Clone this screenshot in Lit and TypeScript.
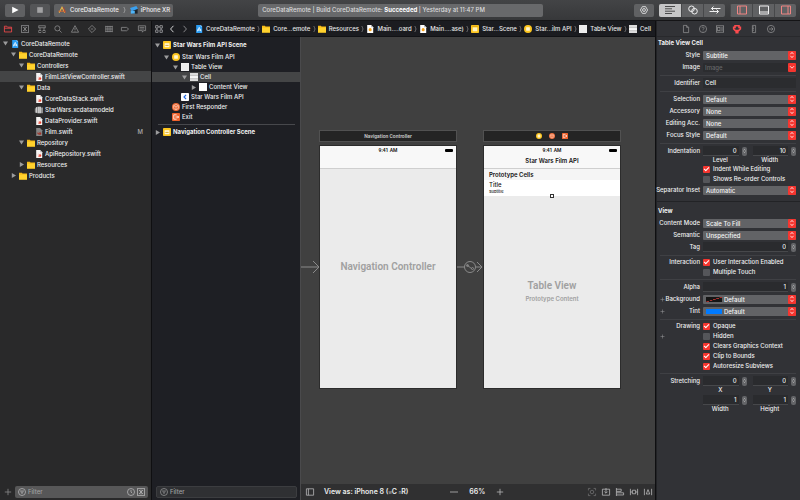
import { LitElement, html, svg, css, nothing, TemplateResult } from "lit";
import { customElement } from "lit/decorators.js";
import { classMap } from "lit/directives/class-map.js";

type Shape = ReturnType<typeof svg>;

/** Icons on a 10 x 10 grid. */
const shapes: Record<string, Shape> = {
  project: svg`<path d="M1.5 0h5.5l2 2v8h-7.5z" fill="#2a9df4"/><path d="M7 0l2 2H7z" fill="#bfe3ff"/><path d="M3 8l2.3-5L7.6 8M2.8 6.3h5" stroke="#fff" fill="none"/>`,
  folder: svg`<path d="M0 .8h3.600l.8 1H10V9.500H0z" fill="#f5b916"/><path d="M0 3.200h10V9.500H0z" fill="#ffd22e"/>`,
  swift: svg`<path d="M1.5 0h4.8L9 2.7V10H1.5z" fill="#f7f5f4"/><path d="M6.3 0L9 2.7H6.3z" fill="#c4c4c4"/><path d="M3 5.2c1.2 1 2 1.500 2.800 1.800L4 4.500l2.700 1.900C7 5.500 6.600 4.700 6.200 4.200c1.500 1 2 2.500 1.500 3.600-1 1.200-3.400.900-4.700-.600 1 .400 1.500.400 2 .200z" fill="#e8402c"/>`,
  swiftDim: svg`<path d="M1.5 0h4.8L9 2.7V10H1.5z" fill="#858585"/><path d="M3 5.200c1.200 1 2 1.500 2.800 1.800L4 4.500l2.700 1.900c.300-.900-.100-1.700-.500-2.200 1.500 1 2 2.500 1.500 3.600-1 1.200-3.400.900-4.700-.600z" fill="#a03228"/>`,
  model: svg`<path d="M1 2l2-1v8L1 8zM3.500 1h4v8h-4zM8 2h1.500v7H8z" fill="#d8d8d8"/><path d="M0 3h1v5H0zM5 1v8M6.300 1v8" stroke="#8a8a8a" stroke-width=".5" fill="#aaa"/>`,
  storyboard: svg`<path d="M1.500 0h4.800L9 2.700V10H1.500z" fill="#fff"/><path d="M6.300 0L9 2.700H6.300z" fill="#bbb"/><circle cx="5.200" cy="5.800" r="1.900" fill="#f6a21c"/>`,
  scene: svg`<rect width="10" height="10" rx="1" fill="#fcc51f"/><rect x="2.200" y="3" width="5.600" height="4.800" fill="#fff3c4"/><path d="M1.500 1.600h7" stroke="#c98d00" stroke-width=".7"/>`,
  controller: svg`<circle cx="5" cy="5" r="5" fill="#fcc51f"/><rect x="2.700" y="2.700" width="4.600" height="4.600" rx=".5" fill="#fff6d2"/>`,
  view: svg`<rect width="10" height="10" fill="#efefef"/><path d="M1 2.500h8M1 5h8M1 7.500h8" stroke="#e0e0e0" stroke-width=".5"/>`,
  cell: svg`<rect width="10" height="10" fill="#dcdcdc"/><rect y="3.300" width="10" height="3.600" fill="#f6f6f6"/><path d="M0 3.200h10M0 7h10" stroke="#a2a2a2" stroke-width=".6"/>`,
  content: svg`<rect width="10" height="10" fill="#fff"/>`,
  navItem: svg`<rect width="10" height="10" rx="1" fill="#fff"/><path d="M6.300 2.300L3.800 5l2.500 2.700" stroke="#2368e0" stroke-width="1.500" fill="none"/>`,
  responder: svg`<circle cx="5" cy="5" r="5" fill="#ee6a36"/><path d="M5 1.800l3 1.500v3.500L5 8.400 2 6.800V3.300zM2 3.300l3 1.500 3-1.500M5 4.800v3.500" stroke="#ffd9c8" stroke-width=".8" fill="none"/>`,
  exit: svg`<rect width="10" height="10" rx="1" fill="#f0622c"/><path d="M5.800 2.300H2.200v5.400h3.600M4.300 5h4M6.700 3.400L8.300 5 6.700 6.600" stroke="#fff" stroke-width="1" fill="none"/>`,
  sceneBar: svg`<rect width="10" height="10" rx="1" fill="#fcc51f"/><rect x="2" y="2.800" width="6" height="5" fill="#fff7da"/><path d="M3 5.500h4" stroke="#d49a00"/>`,
  xcode: svg`<path d="M1.500 8.500L5 1.500l3.500 7" stroke="#e8b84a" stroke-width="1.300" fill="none"/><path d="M.5 6.500h9" stroke="#d86a2c" stroke-width="1.200"/><path d="M7 1.500l2 7" stroke="#c03b28"/>`,
  device: svg`<rect x="3" y="2.500" width="6.500" height="7" fill="#1c242c"/><path d="M0 2.500L8 0l2 3.500-8 3z" fill="#3aa0ef"/><path d="M1 6l5 0v3.500H1z" fill="#4fb4f7"/>`,
  // navigator tabs
  folderLine: svg`<path d="M.5 1.500h3l1 1.200h5v6h-9zM.5 4h9" class="l"/>`,
  xbox: svg`<rect x=".5" y=".8" width="9" height="8.400" class="l"/><path d="M2.500 2.500l5 5M7.500 2.500l-5 5M5 2v6" class="l"/>`,
  tree: svg`<rect x="1" y="1" width="8" height="2.500" class="l"/><path d="M2.500 3.500V7M7.500 3.500V7" class="l"/><rect x="1" y="7" width="2.500" height="2.300" class="l"/><rect x="6.300" y="7" width="2.500" height="2.300" class="l"/>`,
  search: svg`<circle cx="4.200" cy="4.200" r="3.200" class="l"/><path d="M6.500 6.500L9.500 9.500" class="l"/>`,
  warn: svg`<path d="M5 .8L9.500 9H.5zM5 3.500v3M5 7.200v1" class="l"/>`,
  diamond: svg`<path d="M5 .5L9.500 5 5 9.500.5 5zM3.500 5h3" class="l"/>`,
  gauge: svg`<path d="M.5 2h9M.5 5h9M.5 8h9M1 1v8M3.600 1v8M6.300 1v8M9 1v8" class="l"/>`,
  tag: svg`<path d="M.5 3h6.500L9.500 5 7 7.200H.5z" class="l"/>`,
  bubble: svg`<path d="M.5 1h9v6H7L5.500 9V7h-5zM2 3h6M2 5h6" class="l"/>`,
  grid: svg`<path d="M.8.8h3v3h-3zM6.200.8h3v3h-3zM.8 6.200h3v3h-3zM6.200 6.200h3v3h-3zM3.800 2.300h2.400M2.300 3.800v2.400M7.700 3.800v2.400" class="l"/>`,
  back: svg`<path d="M6.800 1L3.200 5l3.600 4" class="l"/>`,
  next: svg`<path d="M3.200 1L6.800 5 3.200 9" class="l"/>`,
  sep: svg`<path d="M3.500 -1c.8 2 2.500 4 2.500 6s-1.700 4-2.500 6" class="l"/>`,
  // inspector tabs
  page: svg`<path d="M1.800.5h4L8.300 3v6.500H1.800zM5.800.5V3h2.500" class="l"/>`,
  help: svg`<circle cx="5" cy="5" r="4.500" class="l"/><path d="M3.600 4c0-2 2.900-1.800 2.800 0 0 1-1.400 1-1.400 2M5 7v1" class="l"/>`,
  identity: svg`<rect x=".5" y="1" width="9" height="8" class="l"/><rect x="2" y="3" width="3" height="4" class="l"/><path d="M6.500 3.500h2M6.500 5h2M6.500 6.500h2" class="l"/>`,
  attributes: svg`<path d="M2.500 1h5v2h1.700v2L7 7H6v2.500H4V7H3L.8 5V3h1.700z" class="l heavy"/>`,
  size: svg`<path d="M3 .5h4v9H3zM3 2.500h2M3 4.500h2M3 6.500h2" class="l"/>`,
  connect: svg`<circle cx="5" cy="5" r="4.500" class="l"/><path d="M2.500 5h5M5.500 3l2 2-2 2" class="l"/>`,
  // toolbar
  play: svg`<path d="M1.500.8L9.500 5 1.500 9.200z" fill="#fff"/>`,
  stop: svg`<rect x="1.500" y="1.500" width="7" height="7" fill="#a2a2a3"/>`,
  shield: svg`<path d="M3 .8h4L9.500 5 7 9.200H3L.5 5z" class="l"/><circle cx="5" cy="5" r="1.800" class="l"/>`,
  lines: svg`<path d="M0 1.500h10M0 3.800h7M0 6.200h10M0 8.500h7" class="l"/>`,
  rings: svg`<circle cx="3.500" cy="3.800" r="2.800" class="l"/><circle cx="6.500" cy="6.200" r="2.800" class="l"/>`,
  swap: svg`<path d="M10.500 3.500H1.500M3.500 1.500L1.500 3.500l2 2M-.5 6.500h9M6.500 4.500l2 2-2 2" class="l"/>`,
  paneLeft: svg`<path d="M.5 1h9v8h-9zM3 1v8" class="l"/>`,
  paneBottom: svg`<path d="M.5 1h9v8h-9zM.5 7h9" class="l"/>`,
  paneRight: svg`<path d="M.5 1h9v8h-9zM7 1v8" class="l"/>`,
  filter: svg`<circle cx="5" cy="5" r="4.400" class="l"/><path d="M2.500 3.800h5M3.500 5.300h3M4.300 6.800h1.400" class="l"/>`,
  clock: svg`<circle cx="5" cy="5" r="4.400" class="l"/><path d="M5 2.300V5l1.500 1.500" class="l"/>`,
  plus: svg`<path d="M5 1v8M1 5h8" class="l"/>`,
  minus: svg`<path d="M0 5h10" class="l"/>`,
  frames: svg`<path d="M.5 3V.5H3M7 .5h2.500V3M9.500 7v2.500H7M3 9.500H.5V7" class="l"/><circle cx="5" cy="5" r="2.200" class="l"/>`,
  embed: svg`<path d="M.5 1.500h9v7.500h-9zM5 0v6M3 4.500l2 2 2-2" class="l"/>`,
  align: svg`<path d="M.5 0v10M.5 1.500h6v2.700h-6M.5 6h9v2.700h-9" class="l"/>`,
  pin: svg`<path d="M.5 1v8M9.500 1v8M.5 5H3M7 5h2.500M3 2.800h4v4.400H3z" class="l"/>`,
  resolve: svg`<path d="M.5 1v8M9.500 1v8M5 2L2.800 7.500h4.400z" class="l"/>`,
  updown: svg`<path d="M3 4l2-2.300L7 4M3 6l2 2.300L7 6" class="l"/>`,
  down: svg`<path d="M2.500 4L5 6.500 7.500 4" class="l"/>`,
};

const icon = (name: string, cls = "") =>
  html`<svg class="icon ${cls}" viewBox="0 0 10 10" aria-hidden="true">${shapes[name]}</svg>`;

interface Node {
  text: string;
  icon: string;
  depth: number;
  open?: boolean;
  selected?: boolean;
  bold?: boolean;
  badge?: string;
}

const files: Node[] = [
  { text: "CoreDataRemote", icon: "project", depth: 0, open: true },
  { text: "CoreDataRemote", icon: "folder", depth: 1, open: true },
  { text: "Controllers", icon: "folder", depth: 2, open: true },
  { text: "FilmListViewController.swift", icon: "swift", depth: 3, selected: true },
  { text: "Data", icon: "folder", depth: 2, open: true },
  { text: "CoreDataStack.swift", icon: "swift", depth: 3 },
  { text: "StarWars.xcdatamodeld", icon: "model", depth: 3 },
  { text: "DataProvider.swift", icon: "swift", depth: 3 },
  { text: "Film.swift", icon: "swiftDim", depth: 3, badge: "M" },
  { text: "Repository", icon: "folder", depth: 2, open: true },
  { text: "ApiRepository.swift", icon: "swift", depth: 3 },
  { text: "Resources", icon: "folder", depth: 2, open: false },
  { text: "Products", icon: "folder", depth: 1, open: false },
];

const filmScene: Node[] = [
  { text: "Star Wars Film API", icon: "controller", depth: 1, open: true },
  { text: "Table View", icon: "view", depth: 2, open: true },
  { text: "Cell", icon: "cell", depth: 3, open: true, selected: true },
  { text: "Content View", icon: "content", depth: 4, open: false },
  { text: "Star Wars Film API", icon: "navItem", depth: 2 },
  { text: "First Responder", icon: "responder", depth: 1 },
  { text: "Exit", icon: "exit", depth: 1 },
];

const crumbs: [string, string][] = [
  ["project", "CoreDataRemote"],
  ["folder", "Core...emote"],
  ["folder", "Resources"],
  ["storyboard", "Main....oard"],
  ["storyboard", "Main....ase)"],
  ["scene", "Star...Scene"],
  ["controller", "Star...ilm API"],
  ["view", "Table View"],
  ["cell", "Cell"],
];

@customElement("app-root")
export class AppRoot extends LitElement {
  static styles = css`
    :host {
      display: flex;
      flex-direction: column;
      height: 100vh;
      overflow: hidden;
      background: #1c1d20;
      color: #f0f0f1;
      font: 500 6px/10px Inter, "Liberation Sans", sans-serif;
      white-space: nowrap;
    }
    * { box-sizing: border-box; }
    button, input, select { font: inherit; color: inherit; margin: 0; padding: 0; border: 0; background: none; min-width: 0; }
    ul { list-style: none; margin: 0; padding: 0; }
    h2 { font: inherit; font-weight: 700; margin: 0; }
    .icon { width: 8px; height: 8px; flex: none; display: block; overflow: visible; }
    .l { fill: none; stroke: currentColor; stroke-width: 1; }
    .heavy { stroke-width: 2; }
    .wide { width: 10px; }
    .big { width: 10px; height: 10px; }

    .toolbar {
      flex: none;
      height: 21px;
      display: grid;
      grid-template-columns: 1fr 36% 1fr;
      align-items: center;
      padding: 0 4px 0 5px;
      background: linear-gradient(#434446, #37383a);
      border-bottom: 1px solid #141416;
    }
    .tools { display: flex; gap: 5px; }
    .tools.end { justify-content: flex-end; }
    .tool, .scheme, .activity, .segments { height: 13px; border-radius: 2px; background: #606163; display: flex; align-items: center; justify-content: center; }
    .tool { width: 20px; }
    .tool.muted { background: #545557; }
    .scheme { gap: 3px; padding: 0 3px; margin-left: -1px; }
    .scheme .thin { color: #d0d0d1; }
    .activity { justify-content: flex-start; padding: 0 4px; background: #68696b; color: #dcdcdd; }
    .activity b { font-weight: 700; color: #fff; }
    .segments { overflow: hidden; }
    .segments button { width: 22px; height: 13px; display: flex; align-items: center; justify-content: center; border-left: 1px solid #47484a; }
    .segments button.on { background: #c6c6c7; color: #4a4a4b; border-left: 0; }
    .pink { color: #ef8583; }

    .window { flex: 1; min-height: 0; display: flex; }
    .navigator { width: 151px; flex: none; display: flex; flex-direction: column; background: #29292a; }
    .tabs { flex: none; height: 16px; display: flex; align-items: center; justify-content: space-between; padding: 0 5px 0 4px; color: #8a8a8c; border-bottom: 1px solid #1d1d1e; }
    .tabs button { color: inherit; }
    .tabs button.active { color: #fc4b4e; }
    .tree { flex: 1; padding-top: 1px; }
    .row { display: flex; align-items: center; gap: 3px; height: 11px; padding-left: 3px; }
    .row.selected { background: #444546; }
    .row.bold { font-weight: 700; height: 13px; }
    .outline .row { height: 10px; }
    .outline .row.bold { height: 14px; }
    .indent { width: 8px; flex: none; }
    .outline .indent { width: 9px; }
    .row .indent + .indent { margin-left: -3px; }
    .row .indent + .twist { margin-left: -3px; }
    .row .label { margin-left: -1px; }
    .twist { width: 5px; height: 5px; flex: none; fill: #9c9c9d; }
    .badge { margin-left: auto; padding-right: 8px; color: #a9a9aa; }
    .filterbar { flex: none; height: 16px; display: flex; align-items: center; gap: 3px; padding: 0 3px 0 4px; color: #8b8b8c; }
    .filter { flex: 1; min-width: 0; height: 12px; display: flex; align-items: center; gap: 2px; padding: 0 3px; border-radius: 2px; background: #575758; color: #b4b4b5; }
    .filter input { flex: 1; width: 0; height: 10px; outline: 0; }
    .filter input::placeholder { color: #a0a0a1; opacity: 1; }
    .outline .filter { background: #2f3033; color: #929293; border: 1px solid #3c3d40; }

    .editor { flex: 1; min-width: 0; display: flex; flex-direction: column; border-left: 1px solid #0f0f11; border-right: 1px solid #0f0f11; }
    .jumpbar { flex: none; height: 16px; display: flex; align-items: center; padding: 0 4px 0 3px; gap: 6px; background: #1b1c20; border-bottom: 1px solid #111215; }
    .history { display: flex; gap: 5px; color: #a0a0a2; }
    .history .bright { color: #fff; }
    .crumbs { flex: 1; display: flex; justify-content: space-between; align-items: center; }
    .crumb { display: flex; align-items: center; gap: 3px; color: #e8e8e9; text-decoration: none; }
    .thin { width: 5px; color: #b4b4b5; }
    .panes { flex: 1; min-height: 0; display: flex; }
    .outline { width: 149px; flex: none; display: flex; flex-direction: column; background: #1e1f24; border-right: 1px solid #4a4a4c; }
    .rule { height: 1px; margin: 2px 5px 0 6px; background: #47484c; }
    .stage { flex: 1; min-width: 0; display: flex; flex-direction: column; background: #404040; }
    .canvas { flex: 1; position: relative; overflow: hidden; }
    .scene { position: absolute; top: 93px; width: 138px; display: flex; flex-direction: column; gap: 3px; }
    .scene.first { left: 18px; }
    .scene.second { left: 182px; }
    .dock { height: 12px; display: flex; align-items: center; justify-content: center; gap: 7px; background: #242424; border: 1px solid #515151; font: 600 5px/10px Roboto, sans-serif; color: #c8c8c8; }
    .dock .icon { width: 6px; height: 6px; }
    .phone { height: 244px; display: flex; flex-direction: column; background: #ebebeb; border: 1px solid #2c2c2c; color: #111; }
    .status { height: 8px; display: grid; grid-template-columns: 1fr auto 1fr; align-items: center; padding: 0 3px; background: #f8f8f8; font: 600 5px/8px Roboto, sans-serif; }
    .battery { grid-column: 3; justify-self: end; width: 8px; height: 3px; border-radius: 1px; background: #000; }
    .titlebar { height: 15px; background: #f8f8f8; border-bottom: 1px solid #cfcfcf; text-align: center; line-height: 14px; font-weight: 600; }
    .protoheader { height: 11px; padding-left: 5px; background: #f5f5f5; font-weight: 600; line-height: 11px; }
    .protocell { position: relative; height: 16px; padding: 1px 5px; background: #fff; line-height: 8px; }
    .protocell small { display: block; font-size: 4px; line-height: 5px; }
    .handle { position: absolute; left: 50%; bottom: -2px; width: 4px; height: 4px; margin-left: -2px; border: 1px solid #333; background: #fff; }
    .placeholder { flex: 1; display: flex; flex-direction: column; align-items: center; justify-content: center; gap: 2px; color: #a0a0a0; font: 600 10px/12px Roboto, sans-serif; }
    .first .placeholder { padding-bottom: 24px; }
    .placeholder small { font: 600 6px/10px Inter, sans-serif; }
    .arrow { position: absolute; top: 223px; height: 14px; color: #8a8a8a; }
    .arrow.entry { left: 0; width: 19px; }
    .arrow.segue { left: 156px; width: 26px; }
    .stagebar { flex: none; height: 16px; display: flex; align-items: center; padding: 0 3px 0 5px; gap: 10px; background: #303031; color: #ececec; font-size: 7px; font-weight: 600; }
    .stagebar small { font-size: 4px; color: #a8a8a8; }
    .zoom { display: flex; align-items: center; gap: 11px; margin-left: 32px; }
    .layouttools { display: flex; gap: 6px; margin-left: auto; color: #b8b8b9; }
    .dim { color: #707071; }
    .slate { color: #b8b8b9; }

    .inspector { width: 144px; flex: none; background: #313236; border-left: 1px solid #222326; }
    .inspector .tabs { justify-content: center; gap: 9px; border-bottom-color: #28292c; }
    .inspector h2 { height: 12px; line-height: 12px; padding-left: 1px; }
    .inspector h2.later { height: 16px; line-height: 17px; border-top: 1px solid #222326; }
    .group { margin: 0 4px 0 3px; padding: 1px 0 2px; border-bottom: 1px solid #3f4044; }
    .group.head { padding-top: 0; }
    .group.last { border-bottom: 0; padding-bottom: 5px; }
    .field { display: grid; grid-template-columns: 5px 36px minmax(0, 1fr); column-gap: 1px; align-items: center; height: 12px; }
    .field.tick { height: 10px; }
    .field .name { grid-column: 1 / 3; display: flex; justify-content: flex-end; padding-right: 2px; }
    .field .icon.add + .name { grid-column: 2; }
    .field .icon.add { width: 5px; height: 5px; color: #98989a; }
    .pick { position: relative; display: flex; }
    .pick select { appearance: none; width: 100%; height: 9px; padding-left: 3px; line-height: 9px; border-radius: 1px; background: #626366; color: #f6f6f6; }
    .pick.swatched select { padding-left: 21px; }
    .pick.blank select { background: #2b2c2f; color: #66676a; padding-left: 2px; }
    .knob { position: absolute; right: 0; top: 0; width: 8px; height: 9px; display: flex; align-items: center; justify-content: center; border-radius: 1px; background: #f5352f; color: #fff; pointer-events: none; }
    .swatch { position: absolute; left: 3px; top: 2px; width: 16px; height: 5px; background: #007aff; pointer-events: none; }
    .swatch.none { background: linear-gradient(163deg, #151515 46%, #a8302c 48%, #a8302c 54%, #151515 56%); }
    .text { width: 100%; height: 10px; padding-left: 2px; background: #2b2c2f; }
    .pair { display: grid; grid-template-columns: 1fr 1fr; column-gap: 6px; }
    .number { display: flex; align-items: center; gap: 3px; }
    .number input { flex: 1; width: 10px; height: 10px; text-align: right; padding-right: 2px; background: #2a2b2e; border-bottom: 1px solid #47484b; }
    .stepper { width: 5px; height: 9px; border-radius: 2px; background: #646568; color: #e0e0e0; display: flex; align-items: center; justify-content: center; }
    .stepper .icon { width: 5px; height: 8px; }
    .captions { display: grid; grid-template-columns: 1fr 1fr; column-gap: 6px; margin-left: 43px; height: 7px; line-height: 6px; text-align: center; }
    .captions label { padding-right: 9px; }
    .check { display: flex; align-items: center; gap: 3px; }
    .check input { appearance: none; flex: none; width: 7px; height: 7px; border-radius: 1px; background: #55565a; display: grid; place-items: center; }
    .check input:checked { background: #f5352f; }
    .check input:checked::before { content: ""; width: 4px; height: 2px; border: solid #fff; border-width: 0 0 1px 1px; transform: rotate(-45deg); margin-bottom: 1px; }
  `;

  private node(n: Node) {
    return html`<li class=${classMap({ row: true, selected: !!n.selected, bold: !!n.bold })}>
      ${Array.from({ length: n.depth }, () => html`<span class="indent"></span>`)}
      <svg class="twist" viewBox="0 0 6 6" aria-hidden="true">
        ${n.open === undefined ? nothing : n.open ? svg`<path d="M0 .5h6L3 5.500z"/>` : svg`<path d="M1 0v6l5-3z"/>`}
      </svg>
      ${icon(n.icon)}<span class="label">${n.text}</span>
      ${n.badge ? html`<span class="badge">${n.badge}</span>` : nothing}
    </li>`;
  }

  private field(name: string, id: string, control: TemplateResult, opts: { add?: boolean; tick?: boolean } = {}) {
    return html`<div class="field ${opts.tick ? "tick" : ""}">
      ${opts.add ? icon("plus", "add") : nothing}
      ${id ? html`<label class="name" for=${id}>${name}</label>` : html`<span class="name">${name}</span>`}
      ${control}
    </div>`;
  }

  private pick(name: string, id: string, value: string, swatch = "") {
    return this.field(name, id, html`<div class="pick ${swatch ? "swatched" : ""}">
      <select id=${id}><option>${value}</option></select>
      ${swatch ? html`<span class="swatch ${swatch}"></span>` : nothing}
      <span class="knob">${icon("updown")}</span>
    </div>`, { add: !!swatch });
  }

  private number(id: string, value: string) {
    return html`<div class="number">
      <input id=${id} type="text" inputmode="numeric" .value=${value}>
      <button class="stepper" aria-label="Step">${icon("updown")}</button>
    </div>`;
  }

  private check(name: string, text: string, on: boolean, add = false) {
    return this.field(name, "", html`<label class="check"><input type="checkbox" .checked=${on}>${text}</label>`, { tick: true, add });
  }

  private pair(name: string, a: [string, string], b: [string, string], prefix: string) {
    return html`${this.field(name, "", html`<div class="pair">${this.number(prefix + "-a", a[1])}${this.number(prefix + "-b", b[1])}</div>`)}
      <div class="captions"><label for="${prefix}-a">${a[0]}</label><label for="${prefix}-b">${b[0]}</label></div>`;
  }

  private tabs(names: string[], active: string) {
    return html`<nav class="tabs">${names.map(
      (n) => html`<button class=${n === active ? "active" : ""} aria-label=${n}>${icon(n)}</button>`
    )}</nav>`;
  }

  private toolbar() {
    return html`<header class="toolbar">
      <div class="tools">
        <button class="tool" aria-label="Run">${icon("play")}</button>
        <button class="tool muted" aria-label="Stop">${icon("stop")}</button>
        <button class="scheme">${icon("xcode", "wide")}<span>CoreDataRemote</span>${icon("sep", "thin")}${icon("device")}<span>iPhone XR</span></button>
      </div>
      <div class="activity"><span>CoreDataRemote | Build CoreDataRemote: <b>Succeeded</b> | Yesterday at 11:47 PM</span></div>
      <div class="tools end">
        <button class="tool" aria-label="Library">${icon("shield")}</button>
        <div class="segments">
          <button class="on" aria-label="Standard editor">${icon("lines", "big")}</button>
          <button aria-label="Assistant editor">${icon("rings", "big")}</button>
          <button aria-label="Version editor">${icon("swap", "big")}</button>
        </div>
        <div class="segments">
          <button class="pink" aria-label="Navigator">${icon("paneLeft", "big")}</button>
          <button aria-label="Debug area">${icon("paneBottom", "big")}</button>
          <button class="pink" aria-label="Inspectors">${icon("paneRight", "big")}</button>
        </div>
      </div>
    </header>`;
  }

  private status() {
    return html`<div class="status"><span></span><span>9:41 AM</span><span class="battery"></span></div>`;
  }

  private canvas() {
    return html`<div class="canvas">
      <section class="scene first">
        <div class="dock">Navigation Controller</div>
        <div class="phone">${this.status()}<div class="titlebar"></div>
          <div class="placeholder">Navigation Controller</div>
        </div>
      </section>
      <section class="scene second">
        <div class="dock">${icon("controller")}${icon("responder")}${icon("exit")}</div>
        <div class="phone">${this.status()}<div class="titlebar">Star Wars Film API</div>
          <div class="protoheader">Prototype Cells</div>
          <div class="protocell">Title<small>Subtitle</small><span class="handle"></span></div>
          <div class="placeholder">Table View<small>Prototype Content</small></div>
        </div>
      </section>
      <svg class="arrow entry" viewBox="0 0 19 14"><path class="l" d="M0 7h18M12 1l6 6-6 6"/></svg>
      <svg class="arrow segue" viewBox="0 0 26 14"><path class="l" d="M0 7h7M19 7h6M20 2l5 5-5 5M10 5l5 4"/><circle class="l" cx="13" cy="7" r="5.500"/><circle class="l" cx="10.500" cy="5.500" r="1"/><circle class="l" cx="15.500" cy="8.500" r="1"/></svg>
    </div>`;
  }

  private inspector() {
    return html`<aside class="inspector">
      ${this.tabs(["page", "help", "identity", "attributes", "size", "connect"], "attributes")}
      <h2>Table View Cell</h2>
      <div class="group head">
        ${this.pick("Style", "style", "Subtitle")}
        ${this.field("Image", "image", html`<div class="pick blank"><select id="image"><option>Image</option></select><span class="knob">${icon("down")}</span></div>`)}
      </div>
      <div class="group">${this.field("Identifier", "identifier", html`<input class="text" id="identifier" type="text" .value=${"Cell"}>`)}</div>
      <div class="group">
        ${this.pick("Selection", "selection", "Default")}
        ${this.pick("Accessory", "accessory", "None")}
        ${this.pick("Editing Acc.", "editing", "None")}
        ${this.pick("Focus Style", "focus", "Default")}
      </div>
      <div class="group last">
        ${this.pair("Indentation", ["Level", "0"], ["Width", "10"], "indent")}
        ${this.check("", "Indent While Editing", true)}
        ${this.check("", "Shows Re-order Controls", false)}
        ${this.pick("Separator Inset", "inset", "Automatic")}
      </div>
      <h2 class="later">View</h2>
      <div class="group head">
        ${this.pick("Content Mode", "mode", "Scale To Fill")}
        ${this.pick("Semantic", "semantic", "Unspecified")}
        ${this.field("Tag", "tag", this.number("tag", "0"))}
      </div>
      <div class="group">
        ${this.check("Interaction", "User Interaction Enabled", true)}
        ${this.check("", "Multiple Touch", false)}
      </div>
      <div class="group">
        ${this.field("Alpha", "alpha", this.number("alpha", "1"))}
        ${this.pick("Background", "background", "Default", "none")}
        ${this.pick("Tint", "tint", "Default", "blue")}
      </div>
      <div class="group">
        ${this.check("Drawing", "Opaque", true)}
        ${this.check("", "Hidden", false, true)}
        ${this.check("", "Clears Graphics Context", true)}
        ${this.check("", "Clip to Bounds", true)}
        ${this.check("", "Autoresize Subviews", true)}
      </div>
      <div class="group last">
        ${this.pair("Stretching", ["X", "0"], ["Y", "0"], "origin")}
        ${this.pair("", ["Width", "1"], ["Height", "1"], "extent")}
      </div>
    </aside>`;
  }

  render() {
    return html`${this.toolbar()}
      <main class="window">
        <aside class="navigator">
          ${this.tabs(["folderLine", "xbox", "tree", "search", "warn", "diamond", "gauge", "tag", "bubble"], "folderLine")}
          <ul class="tree">${files.map((f) => this.node(f))}</ul>
          <div class="filterbar">${icon("plus")}
            <label class="filter">${icon("filter")}<input type="text" placeholder="Filter" aria-label="Filter files">${icon("clock")}${icon("xbox")}</label>
          </div>
        </aside>
        <div class="editor">
          <nav class="jumpbar">
            <div class="history">${icon("grid")}${icon("back", "bright")}${icon("next")}</div>
            <div class="crumbs">${crumbs.map(
              ([i, t], k) => html`${k ? icon("sep", "thin") : nothing}<a class="crumb" href="#">${icon(i)}<span>${t}</span></a>`
            )}</div>
          </nav>
          <div class="panes">
            <aside class="outline">
              <div class="tree">
                <ul>${this.node({ text: "Star Wars Film API Scene", icon: "sceneBar", depth: 0, open: true, bold: true })}
                ${filmScene.map((n) => this.node(n))}</ul>
                <div class="rule"></div>
                <ul>${this.node({ text: "Navigation Controller Scene", icon: "sceneBar", depth: 0, open: false, bold: true })}</ul>
              </div>
              <div class="filterbar"><label class="filter">${icon("filter")}<input type="text" placeholder="Filter" aria-label="Filter outline"></label></div>
            </aside>
            <section class="stage">
              ${this.canvas()}
              <footer class="stagebar">
                ${icon("paneLeft", "slate")}
                <span>View as: iPhone 8 (<small>w</small>C <small>h</small>R)</span>
                <div class="zoom"><button aria-label="Zoom out">${icon("minus", "slate")}</button><span>66%</span><button aria-label="Zoom in">${icon("plus", "slate")}</button></div>
                <div class="layouttools">${icon("frames", "dim")}${icon("embed")}${icon("align")}${icon("pin")}${icon("resolve")}</div>
              </footer>
            </section>
          </div>
        </div>
        ${this.inspector()}
      </main>`;
  }
}
